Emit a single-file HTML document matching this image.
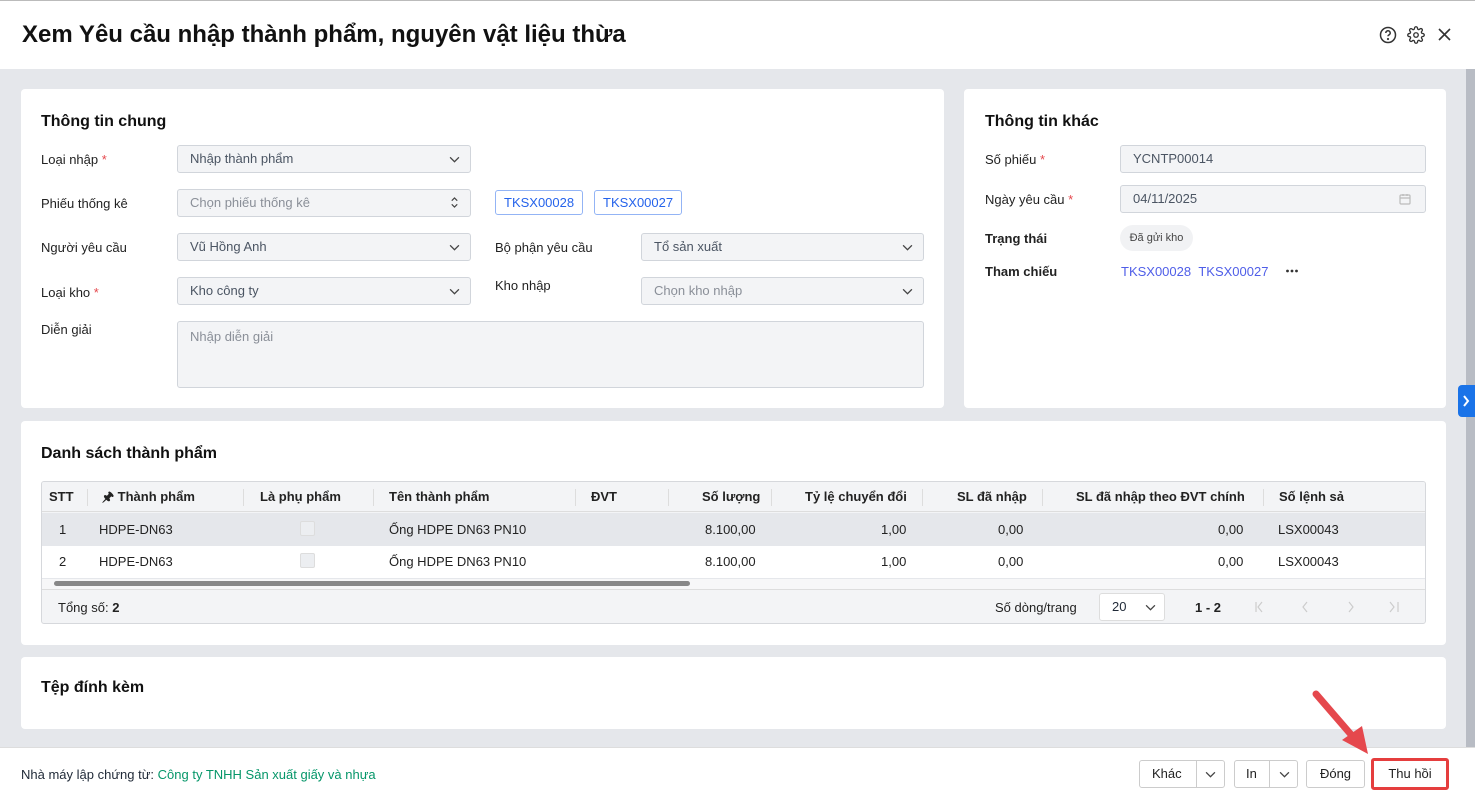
<!DOCTYPE html>
<html><head><meta charset="utf-8"><style>
*{box-sizing:border-box;margin:0;padding:0}
body{width:1475px;height:801px;overflow:hidden;background:#e5e7eb;font-family:"Liberation Sans",Arial,sans-serif;font-size:13px;color:#1f2937;position:relative}
.a{position:absolute}
.card{position:absolute;background:#fff;border-radius:4px}
.h{font-weight:bold;font-size:16px;color:#111}
.lbl{position:absolute;font-size:13px;color:#222}
.req{color:#e5484d}
.inp{position:absolute;height:28px;background:#f3f4f6;border:1px solid #d1d5db;border-radius:3px;padding:0 12px;line-height:26px;color:#4b5563;font-size:13px}
.ph{color:#8a8f98}
.chev{position:absolute;right:10px;top:8px;width:11px;height:11px}
.tag{position:absolute;height:25px;border:1px solid #93b4f5;border-radius:3px;color:#2563eb;padding:0 8px;line-height:23px;font-size:13px}
.th{position:absolute;top:0;height:30px;line-height:30px;font-weight:bold;font-size:13px;color:#222}
.sep{position:absolute;top:7px;width:1px;height:17px;background:#ddd}
.td{position:absolute;font-size:13px;color:#222}
.btn{position:absolute;height:28px;border:1px solid #ccc;border-radius:3px;background:#fff;line-height:26px;text-align:center;font-size:13px;color:#222}
</style></head><body>
<div class="a" style="left:0;top:0;width:1475px;height:69px;background:#fff;border-top:1px solid #bbb"></div>
<div class="a" style="left:22px;top:21px;font-size:24px;font-weight:bold;color:#111">Xem Yêu cầu nhập thành phẩm, nguyên vật liệu thừa</div>
<svg class="a" style="left:1379px;top:26px" width="18" height="18" viewBox="0 0 18 18" fill="none" stroke="#333" stroke-width="1.5"><circle cx="9" cy="9" r="7.5"/><path d="M6.8 7a2.2 2.2 0 1 1 3 2c-.6.3-.8.7-.8 1.3"/><circle cx="9" cy="13" r=".4" fill="#333"/></svg>
<svg class="a" style="left:1407px;top:26px" width="18" height="18" viewBox="0 0 24 24" fill="none" stroke="#333" stroke-width="1.8"><circle cx="12" cy="12" r="3"/><path d="M19.4 15a1.7 1.7 0 0 0 .3 1.8l.1.1a2 2 0 1 1-2.8 2.8l-.1-.1a1.7 1.7 0 0 0-1.8-.3 1.7 1.7 0 0 0-1 1.5V21a2 2 0 1 1-4 0v-.1a1.7 1.7 0 0 0-1.1-1.5 1.7 1.7 0 0 0-1.8.3l-.1.1a2 2 0 1 1-2.8-2.8l.1-.1a1.7 1.7 0 0 0 .3-1.8 1.7 1.7 0 0 0-1.5-1H3a2 2 0 1 1 0-4h.1a1.7 1.7 0 0 0 1.5-1.1 1.7 1.7 0 0 0-.3-1.8l-.1-.1a2 2 0 1 1 2.8-2.8l.1.1a1.7 1.7 0 0 0 1.8.3H9a1.7 1.7 0 0 0 1-1.5V3a2 2 0 1 1 4 0v.1a1.7 1.7 0 0 0 1 1.5 1.7 1.7 0 0 0 1.8-.3l.1-.1a2 2 0 1 1 2.8 2.8l-.1.1a1.7 1.7 0 0 0-.3 1.8V9a1.7 1.7 0 0 0 1.5 1H21a2 2 0 1 1 0 4h-.1a1.7 1.7 0 0 0-1.5 1z"/></svg>
<svg class="a" style="left:1438px;top:28px" width="13" height="13" viewBox="0 0 13 13" stroke="#333" stroke-width="1.6"><path d="M1 1l11 11M12 1L1 12"/></svg>
<div class="a" style="left:1466px;top:69px;width:9px;height:678px;background:#b8bcc4"></div>
<div class="a" style="left:1458px;top:385px;width:17px;height:32px;background:#1a73e8;border-radius:4px 0 0 4px"></div>
<svg class="a" style="left:1462px;top:395px" width="8" height="12" viewBox="0 0 8 12" fill="none" stroke="#fff" stroke-width="2"><path d="M2 1l4 5-4 5"/></svg>

<div class="card" style="left:21px;top:89px;width:923px;height:319px"></div>
<div class="a h" style="left:41px;top:113px">Thông tin chung</div>
<div class="lbl" style="left:41px;top:152px">Loại nhập <span class="req">*</span></div>
<div class="inp" style="left:177px;top:145px;width:294px">Nhập thành phẩm<svg class="chev" viewBox="0 0 10 10" fill="none" stroke="#444" stroke-width="1.2"><path d="M1 3l4 4 4-4"/></svg></div>
<div class="lbl" style="left:41px;top:196px">Phiếu thống kê</div>
<div class="inp ph" style="left:177px;top:189px;width:294px">Chọn phiếu thống kê<svg class="chev" style="top:7px" viewBox="0 0 10 12" fill="none" stroke="#444" stroke-width="1.3"><path d="M2 4l3-3 3 3M2 8l3 3 3-3"/></svg></div>
<div class="tag" style="left:495px;top:190px">TKSX00028</div>
<div class="tag" style="left:594px;top:190px">TKSX00027</div>
<div class="lbl" style="left:41px;top:240px">Người yêu cầu</div>
<div class="inp" style="left:177px;top:233px;width:294px">Vũ Hồng Anh<svg class="chev" viewBox="0 0 10 10" fill="none" stroke="#444" stroke-width="1.2"><path d="M1 3l4 4 4-4"/></svg></div>
<div class="lbl" style="left:495px;top:240px">Bộ phận yêu cầu</div>
<div class="inp" style="left:641px;top:233px;width:283px">Tổ sản xuất<svg class="chev" viewBox="0 0 10 10" fill="none" stroke="#444" stroke-width="1.2"><path d="M1 3l4 4 4-4"/></svg></div>
<div class="lbl" style="left:41px;top:285px">Loại kho <span class="req">*</span></div>
<div class="inp" style="left:177px;top:277px;width:294px">Kho công ty<svg class="chev" viewBox="0 0 10 10" fill="none" stroke="#444" stroke-width="1.2"><path d="M1 3l4 4 4-4"/></svg></div>
<div class="lbl" style="left:495px;top:278px">Kho nhập</div>
<div class="inp ph" style="left:641px;top:277px;width:283px">Chọn kho nhập<svg class="chev" viewBox="0 0 10 10" fill="none" stroke="#444" stroke-width="1.2"><path d="M1 3l4 4 4-4"/></svg></div>
<div class="lbl" style="left:41px;top:322px">Diễn giải</div>
<div class="inp ph" style="left:177px;top:321px;width:747px;height:67px;line-height:30px">Nhập diễn giải</div>

<div class="card" style="left:964px;top:89px;width:482px;height:319px"></div>
<div class="a h" style="left:985px;top:113px">Thông tin khác</div>
<div class="lbl" style="left:985px;top:152px">Số phiếu <span class="req">*</span></div>
<div class="inp" style="left:1120px;top:145px;width:306px">YCNTP00014</div>
<div class="lbl" style="left:985px;top:192px">Ngày yêu cầu <span class="req">*</span></div>
<div class="inp" style="left:1120px;top:185px;width:306px">04/11/2025<svg class="a" style="right:14px;top:7px" width="12" height="12" viewBox="0 0 12 12" fill="none" stroke="#bbb" stroke-width="1.2"><rect x="1" y="2" width="10" height="9" rx="1"/><path d="M1 5h10M4 1v2M8 1v2"/></svg></div>
<div class="lbl" style="left:985px;top:231px;font-weight:bold">Trạng thái</div>
<div class="a" style="left:1120px;top:225px;width:73px;height:26px;border-radius:13px;background:#f1f2f4;font-size:11px;line-height:26px;text-align:center;color:#444">Đã gửi kho</div>
<div class="lbl" style="left:985px;top:264px;font-weight:bold">Tham chiếu</div>
<div class="a" style="left:1121px;top:264px;color:#4f5ee8">TKSX00028&nbsp;&nbsp;TKSX00027</div>
<svg class="a" style="left:1286px;top:269px" width="12" height="4" viewBox="0 0 12 4" fill="#333"><circle cx="1.5" cy="2" r="1.4"/><circle cx="6" cy="2" r="1.4"/><circle cx="10.5" cy="2" r="1.4"/></svg>

<div class="card" style="left:21px;top:421px;width:1425px;height:224px"></div>
<div class="a h" style="left:41px;top:445px">Danh sách thành phẩm</div>
<div class="a" style="left:41px;top:481px;width:1385px;height:143px;border:1px solid #d6d8dc;border-radius:3px;background:#f3f4f6;overflow:hidden">
 <div class="a" style="left:0;top:0;width:1385px;height:30px;background:#f3f4f6;border-bottom:1px solid #ddd">
  <div class="th" style="left:7px">STT</div><div class="sep" style="left:45px"></div>
  <div class="th" style="left:60px">🖈 Thành phẩm</div><div class="sep" style="left:201px"></div>
  <div class="th" style="left:218px">Là phụ phẩm</div><div class="sep" style="left:331px"></div>
  <div class="th" style="left:347px">Tên thành phẩm</div><div class="sep" style="left:533px"></div>
  <div class="th" style="left:549px">ĐVT</div><div class="sep" style="left:626px"></div>
  <div class="th" style="left:660px">Số lượng</div><div class="sep" style="left:729px"></div>
  <div class="th" style="left:763px">Tỷ lệ chuyển đổi</div><div class="sep" style="left:880px"></div>
  <div class="th" style="left:915px">SL đã nhập</div><div class="sep" style="left:1000px"></div>
  <div class="th" style="left:1034px">SL đã nhập theo ĐVT chính</div><div class="sep" style="left:1221px"></div>
  <div class="th" style="left:1237px">Số lệnh sả</div>
 </div>
 <div class="a" style="left:0;top:31px;width:1385px;height:33px;background:#e5e7eb"></div>
 <div class="a" style="left:0;top:64px;width:1385px;height:33px;background:#fff;border-bottom:1px solid #e5e7eb"></div>
 <div class="a" style="left:0;top:97px;width:1385px;height:11px;background:#f7f7f8;border-bottom:1px solid #ddd"></div>
 <div class="a" style="left:12px;top:99px;width:636px;height:5px;background:#888;border-radius:3px"></div>
 <div class="td" style="left:17px;top:40px">1</div><div class="td" style="left:57px;top:40px">HDPE-DN63</div>
 <div class="a" style="left:258px;top:39px;width:15px;height:15px;border:1px solid #ddd;background:#eceef1;border-radius:2px"></div>
 <div class="td" style="left:347px;top:40px">Ống HDPE DN63 PN10</div><div class="td" style="left:663px;top:40px">8.100,00</div><div class="td" style="left:839px;top:40px">1,00</div><div class="td" style="left:956px;top:40px">0,00</div><div class="td" style="left:1176px;top:40px">0,00</div><div class="td" style="left:1236px;top:40px">LSX00043</div>
 <div class="td" style="left:17px;top:72px">2</div><div class="td" style="left:57px;top:72px">HDPE-DN63</div>
 <div class="a" style="left:258px;top:71px;width:15px;height:15px;border:1px solid #ddd;background:#eceef1;border-radius:2px"></div>
 <div class="td" style="left:347px;top:72px">Ống HDPE DN63 PN10</div><div class="td" style="left:663px;top:72px">8.100,00</div><div class="td" style="left:839px;top:72px">1,00</div><div class="td" style="left:956px;top:72px">0,00</div><div class="td" style="left:1176px;top:72px">0,00</div><div class="td" style="left:1236px;top:72px">LSX00043</div>
 <div class="td" style="left:16px;top:118px">Tổng số: <b>2</b></div>
 <div class="td" style="left:953px;top:118px">Số dòng/trang</div>
 <div class="a" style="left:1057px;top:111px;width:66px;height:28px;border:1px solid #ddd;background:#fff;border-radius:3px;padding-left:12px;line-height:26px">20<svg class="a" style="right:8px;top:8px" width="11" height="11" viewBox="0 0 10 10" fill="none" stroke="#444" stroke-width="1.2"><path d="M1 3l4 4 4-4"/></svg></div>
 <div class="td" style="left:1153px;top:118px;font-weight:bold">1 - 2</div>
 <svg class="a" style="left:1210px;top:118px" width="150" height="14" viewBox="0 0 150 14" fill="none" stroke="#ccc" stroke-width="1.2"><path d="M4 2v10M10 2l-4 5 4 5M55 2l-4 5 4 5M97 2l4 5-4 5M138 2l4 5-4 5M146 2v10"/></svg>
</div>

<div class="card" style="left:21px;top:657px;width:1425px;height:72px"></div>
<div class="a h" style="left:41px;top:679px">Tệp đính kèm</div>

<div class="a" style="left:0;top:747px;width:1475px;height:54px;background:#fff;border-top:1px solid #ddd"></div>
<div class="a" style="left:21px;top:767px">Nhà máy lập chứng từ: <span style="color:#059669">Công ty TNHH Sản xuất giấy và nhựa</span></div>
<div class="btn" style="left:1139px;top:760px;width:86px;text-align:left;padding-left:12px">Khác<span class="a" style="left:56px;top:0;width:1px;height:26px;background:#ccc"></span><svg class="a" style="left:65px;top:8px" width="11" height="11" viewBox="0 0 10 10" fill="none" stroke="#444" stroke-width="1.2"><path d="M1 3l4 4 4-4"/></svg></div>
<div class="btn" style="left:1234px;top:760px;width:64px;text-align:left;padding-left:11px">In<span class="a" style="left:34px;top:0;width:1px;height:26px;background:#ccc"></span><svg class="a" style="left:44px;top:8px" width="11" height="11" viewBox="0 0 10 10" fill="none" stroke="#444" stroke-width="1.2"><path d="M1 3l4 4 4-4"/></svg></div>
<div class="btn" style="left:1306px;top:760px;width:59px">Đóng</div>
<div class="btn" style="left:1371px;top:758px;width:78px;height:32px;border:3px solid #e53e3e;line-height:26px">Thu hồi</div>
<svg class="a" style="left:1310px;top:688px" width="62" height="70" viewBox="0 0 62 70"><path d="M6 6L44 50" stroke="#e5484d" stroke-width="7" stroke-linecap="round"/><path d="M32 52L58 66L52 38Z" fill="#e5484d"/></svg>
</body></html>
